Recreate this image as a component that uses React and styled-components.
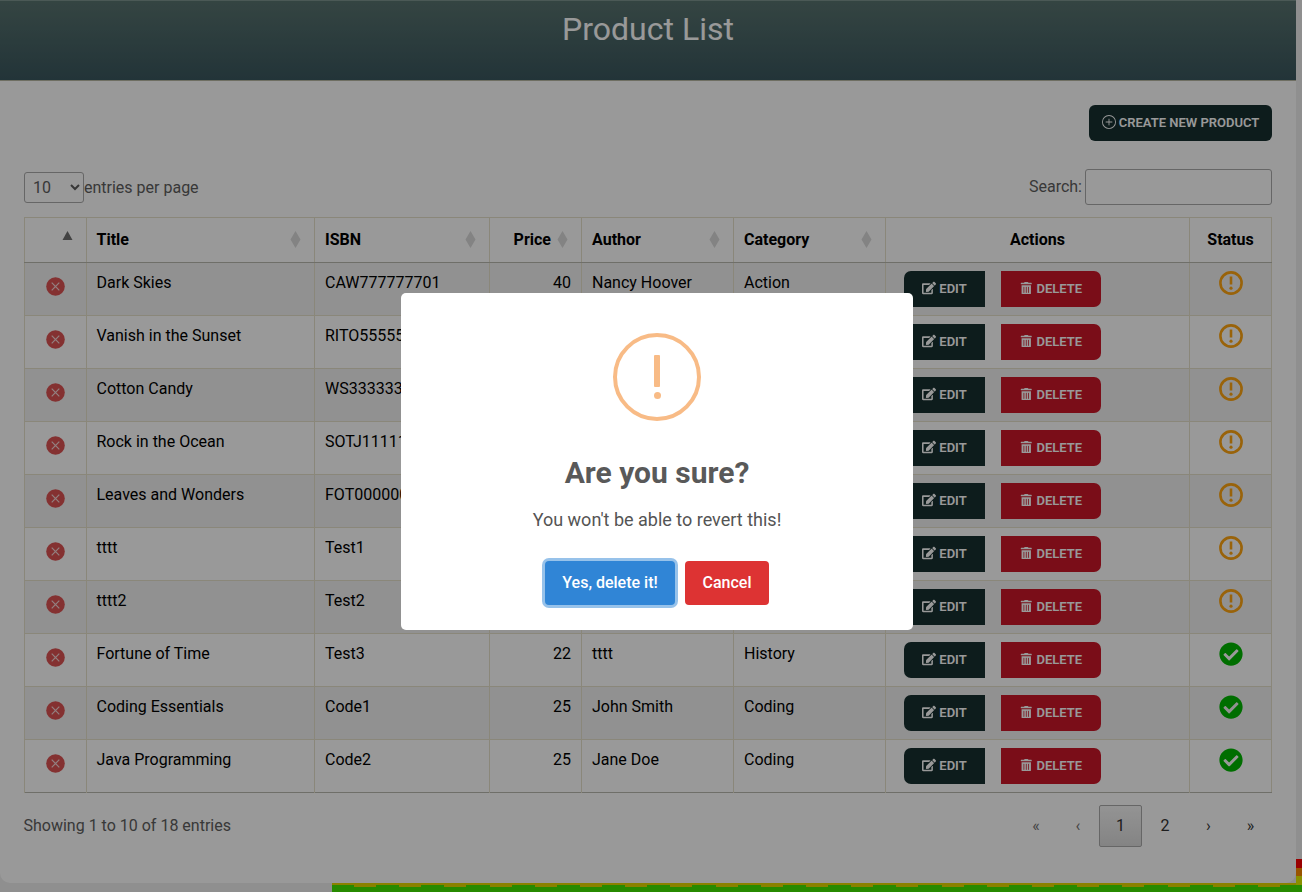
import React from 'react';
import styled, { createGlobalStyle } from 'styled-components';
import { BsPlusCircle } from 'react-icons/bs';
import { FaCheckCircle, FaEdit, FaTrashAlt } from 'react-icons/fa';

const Global = createGlobalStyle`
  html, body { margin: 0; padding: 0; height: 100%; overflow: hidden; }
  body { font-family: Roboto, "Liberation Sans", sans-serif; font-size: 16px; line-height: 24px; color: #000; }
  * { box-sizing: border-box; }
`;

const Page = styled.div`
  position: relative;
  width: 1302px;
  height: 892px;
  overflow: hidden;
  background-color: #eee;
  background-image:
    linear-gradient(to bottom, #ff0000 0 9px, #ff8c00 9px 17px, #e6f000 17px 26px),
    repeating-linear-gradient(90deg, #e6d800 0 22px, transparent 22px 45.2px),
    linear-gradient(to bottom, #e6d800 0 2px, #42e600 2px);
  background-repeat: no-repeat;
  background-position: right 0 top 859px, 354px 883px, 332px 883px;
  background-size: 6px 26px, 948px 4px, 970px 9px;
`;

const Card = styled.main`
  width: 1296px;
  height: 883px;
  background: #fff;
  border-radius: 0 0 10px 10px;
  overflow: hidden;
`;

const Header = styled.header`
  height: 81px;
  padding-top: 5px;
  text-align: center;
  background: linear-gradient(to bottom, #58736f, #3a575e);
  border-top: 1px solid #7d9490;
  border-bottom: 1px solid #b8b8a4;
`;

const PageTitle = styled.h1`
  margin: 0;
  font-size: 32px;
  line-height: 46px;
  font-weight: 400;
  color: #fff;
`;

const Content = styled.div`
  padding: 24px 24px 0;
`;

const TopBar = styled.div`
  display: flex;
  justify-content: flex-end;
  margin-bottom: 28px;
`;

const CreateButton = styled.button`
  display: inline-flex;
  align-items: center;
  gap: 3px;
  height: 36px;
  width: 183px;
  padding: 0 0 2px;
  justify-content: center;
  border: 0;
  border-radius: 6px;
  background: #162f2f;
  color: #fff;
  font: 600 13px/1 Roboto, sans-serif;
  text-transform: uppercase;
`;

const Controls = styled.div`
  display: flex;
  justify-content: space-between;
  align-items: center;
  height: 36px;
  margin-bottom: 12px;
`;

const Entries = styled.label`
  display: flex;
  align-items: center;
  color: #5e5e5e;
`;

const EntriesText = styled.span`
  padding-top: 2px;
`;

const EntriesSelect = styled.select`
  width: 60px;
  height: 31px;
  padding: 0 4px;
  font: 400 16px Roboto, sans-serif;
  color: #5e5e5e;
  background: transparent;
  border: 1px solid #aaa;
  border-radius: 3px;
`;

const SearchLabel = styled.label`
  display: flex;
  align-items: center;
  gap: 3px;
  color: #5e5e5e;
`;

const SearchInput = styled.input`
  width: 187px;
  height: 36px;
  border: 1px solid #aaa;
  border-radius: 3px;
  background: transparent;
`;

const Table = styled.table`
  width: 1247px;
  table-layout: fixed;
  border-collapse: collapse;
  border-top: 1px solid #e6e1cc;
  border-left: 1px solid #e6e1cc;
  border-right: 1px solid #e6e1cc;
  border-bottom: 1px solid #b9b9b0;
`;

const Th = styled.th`
  position: relative;
  height: 45px;
  padding: 0 ${p => (p.$right ? '30px' : '10px')} 0 10px;
  font-weight: 700;
  font-size: 16px;
  text-align: ${p => (p.$center ? 'center' : p.$right ? 'right' : 'left')};
  border-left: 1px solid #e6e1cc;
  border-bottom: 1px solid #b9b9b0;
  &:nth-child(2) { padding-left: 9.5px; }
`;

const SortMark = styled.svg`
  position: absolute;
  right: 13px;
  top: 13px;
  width: 11px;
  height: 17px;
`;

const Row = styled.tr`
  height: 53px;
  background: ${p => (p.$odd ? '#f2f2f2' : '#fff')};
`;

const Td = styled.td`
  padding: 8px 10px;
  vertical-align: top;
  line-height: 24px;
  text-align: ${p => (p.$right ? 'right' : p.$center ? 'center' : 'left')};
  border-left: 1px solid #e6e1cc;
  border-top: 1px solid #e6e1cc;
  &:nth-child(2) { padding-left: 9.5px; }
`;

const RemoveIcon = styled.svg`
  display: block;
  width: 19px;
  height: 19px;
  margin: 6px auto 0;
`;

const Actions = styled.div`
  display: flex;
  gap: 16px;
  padding-left: 8px;
`;

const ActionButton = styled.button`
  display: inline-flex;
  align-items: center;
  justify-content: center;
  gap: ${p => (p.$danger ? '4px' : '3px')};
  width: ${p => (p.$danger ? '100px' : '81px')};
  height: 36px;
  border: 0;
  padding: 0 0 2px;
  color: #fff;
  background: ${p => (p.$danger ? '#cb1728' : '#162f2f')};
  border-radius: ${p => (p.$danger ? '0 7px 7px 0' : '7px 0 0 7px')};
  font: 600 13px/1 Roboto, sans-serif;
  text-transform: uppercase;
`;

const StatusWrap = styled.div`
  display: flex;
  justify-content: center;
  line-height: 0;
`;

const Footer = styled.div`
  display: flex;
  justify-content: space-between;
  align-items: center;
  margin-top: 12px;
`;

const Info = styled.div`
  color: #5e5e5e;
  margin: 0 0 1px -0.5px;
`;

const Pagination = styled.nav`
  display: flex;
`;

const PageLink = styled.span`
  width: ${p => p.$w}px;
  height: 42px;
  padding-bottom: 1px;
  display: flex;
  align-items: center;
  justify-content: center;
  border-radius: 2px;
  border: 1px solid ${p => (p.$current ? '#aaa' : 'transparent')};
  background: ${p => (p.$current ? 'linear-gradient(to bottom, #f6f6f6, #dcdcdc)' : 'transparent')};
  color: ${p => (p.$disabled ? '#707070' : '#333')};
`;

const Overlay = styled.div`
  position: fixed;
  inset: 0;
  padding: 31px 0 0 12px;
  display: flex;
  align-items: center;
  justify-content: center;
  background: rgba(0, 0, 0, 0.4);
`;

const Modal = styled.div`
  width: 512px;
  height: 337px;
  padding-top: 40px;
  background: #fff;
  border-radius: 5px;
  display: flex;
  flex-direction: column;
  align-items: center;
`;

const ModalIcon = styled.div`
  width: 88px;
  height: 88px;
  border: 4px solid #f8bb86;
  border-radius: 50%;
  display: flex;
  flex-direction: column;
  align-items: center;
  padding-top: 18px;
  flex: none;
`;

const Stem = styled.span`
  width: 6px;
  height: 32px;
  border-radius: 1px;
  background: #f8bb86;
`;

const Dot = styled.span`
  width: 7px;
  height: 7px;
  margin-top: 5px;
  border-radius: 50%;
  background: #f8bb86;
`;

const ModalTitle = styled.h2`
  margin: 34px 0 15px;
  font-size: 30px;
  line-height: 36px;
  font-weight: 700;
  color: #595959;
`;

const ModalText = styled.p`
  margin: 0 0 28px;
  font-size: 18px;
  line-height: 27px;
  color: #545454;
`;

const ModalActions = styled.div`
  display: flex;
  gap: 10px;
`;

const ModalButton = styled.button`
  height: 44px;
  padding: 0;
  width: ${p => (p.$primary ? '130px' : '84px')};
  border: 0;
  border-radius: 4px;
  color: #fff;
  font: 500 16px/1 Roboto, sans-serif;
  background: ${p => (p.$primary ? '#3085d6' : '#dd3333')};
  box-shadow: ${p => (p.$primary ? '0 0 0 3px rgba(48, 133, 214, 0.5)' : 'none')};
`;

const rows = [
  ['Dark Skies', 'CAW777777701', 40, 'Nancy Hoover', 'Action', false],
  ['Vanish in the Sunset', 'RITO5555501', 55, 'Julian Button', 'Action', false],
  ['Cotton Candy', 'WS3333333301', 70, 'Abby Muscles', 'SciFi', false],
  ['Rock in the Ocean', 'SOTJ1111111101', 30, 'Ron Parker', 'SciFi', false],
  ['Leaves and Wonders', 'FOT000000001', 25, 'Laura Phantom', 'History', false],
  ['tttt', 'Test1', 20, 'tttt', 'History', false],
  ['tttt2', 'Test2', 21, 'tttt', 'History', false],
  ['Fortune of Time', 'Test3', 22, 'tttt', 'History', true],
  ['Coding Essentials', 'Code1', 25, 'John Smith', 'Coding', true],
  ['Java Programming', 'Code2', 25, 'Jane Doe', 'Coding', true],
];

const widths = [62, 228, 175, 92, 152, 152, 304, 82];

const pages = [
  { label: '«', w: 42, disabled: true },
  { label: '‹', w: 42, disabled: true },
  { label: '1', w: 43, current: true },
  { label: '2', w: 46 },
  { label: '›', w: 41 },
  { label: '»', w: 43 },
];

const Sort = ({ active }) => (
  <SortMark viewBox="0 0 10 17">
    {active ? (
      <path d="M5 0 L10 9 L0 9 Z" fill="#707070" />
    ) : (
      <path d="M5 0 L10 8.5 L5 17 L0 8.5 Z" fill="#dadada" />
    )}
  </SortMark>
);

const RemoveMark = () => (
  <RemoveIcon viewBox="0 0 19 19">
    <circle cx="9.5" cy="9.5" r="9.3" fill="#dc5252" />
    <path d="M5.7 5.7 L13.3 13.3 M13.3 5.7 L5.7 13.3" stroke="#f4d6d6" strokeWidth="1.2" />
  </RemoveIcon>
);

const PendingMark = () => (
  <svg width="24" height="24" viewBox="0 0 24 24">
    <circle cx="12" cy="12" r="10.6" fill="none" stroke="#ffa511" strokeWidth="2.6" />
    <path d="M12 5.5 V13.5" stroke="#ffa511" strokeWidth="2.6" />
    <circle cx="12" cy="17.2" r="1.6" fill="#ffa511" />
  </svg>
);

export default function App() {
  return (
    <Page>
      <Global />
      <Card>
        <Header>
          <PageTitle>Product List</PageTitle>
        </Header>
        <Content>
          <TopBar>
            <CreateButton>
              <BsPlusCircle size={14} />
              Create New Product
            </CreateButton>
          </TopBar>
          <Controls>
            <Entries>
              <EntriesSelect defaultValue="10">
                <option>10</option>
                <option>25</option>
                <option>50</option>
              </EntriesSelect>
              <EntriesText>entries per page</EntriesText>
            </Entries>
            <SearchLabel>
              Search:
              <SearchInput />
            </SearchLabel>
          </Controls>
          <Table>
            <colgroup>
              {widths.map((w, i) => (
                <col key={i} style={{ width: w }} />
              ))}
            </colgroup>
            <thead>
              <tr>
                <Th><Sort active /></Th>
                <Th>Title<Sort /></Th>
                <Th>ISBN<Sort /></Th>
                <Th $right>Price<Sort /></Th>
                <Th>Author<Sort /></Th>
                <Th>Category<Sort /></Th>
                <Th $center>Actions</Th>
                <Th $center>Status</Th>
              </tr>
            </thead>
            <tbody>
              {rows.map((r, i) => (
                <Row key={r[0]} $odd={i % 2 === 0}>
                  <Td><RemoveMark /></Td>
                  <Td>{r[0]}</Td>
                  <Td>{r[1]}</Td>
                  <Td $right>{r[2]}</Td>
                  <Td>{r[3]}</Td>
                  <Td>{r[4]}</Td>
                  <Td>
                    <Actions>
                      <ActionButton><FaEdit size={14} />Edit</ActionButton>
                      <ActionButton $danger><FaTrashAlt size={12.5} />Delete</ActionButton>
                    </Actions>
                  </Td>
                  <Td>
                    <StatusWrap>
                      {r[5] ? <FaCheckCircle size={24} color="#00b800" /> : <PendingMark />}
                    </StatusWrap>
                  </Td>
                </Row>
              ))}
            </tbody>
          </Table>
          <Footer>
            <Info>Showing 1 to 10 of 18 entries</Info>
            <Pagination>
              {pages.map(p => (
                <PageLink key={p.label} $w={p.w} $current={p.current} $disabled={p.disabled}>
                  {p.label}
                </PageLink>
              ))}
            </Pagination>
          </Footer>
        </Content>
      </Card>
      <Overlay>
        <Modal>
          <ModalIcon>
            <Stem />
            <Dot />
          </ModalIcon>
          <ModalTitle>Are you sure?</ModalTitle>
          <ModalText>You won't be able to revert this!</ModalText>
          <ModalActions>
            <ModalButton $primary>Yes, delete it!</ModalButton>
            <ModalButton>Cancel</ModalButton>
          </ModalActions>
        </Modal>
      </Overlay>
    </Page>
  );
}
